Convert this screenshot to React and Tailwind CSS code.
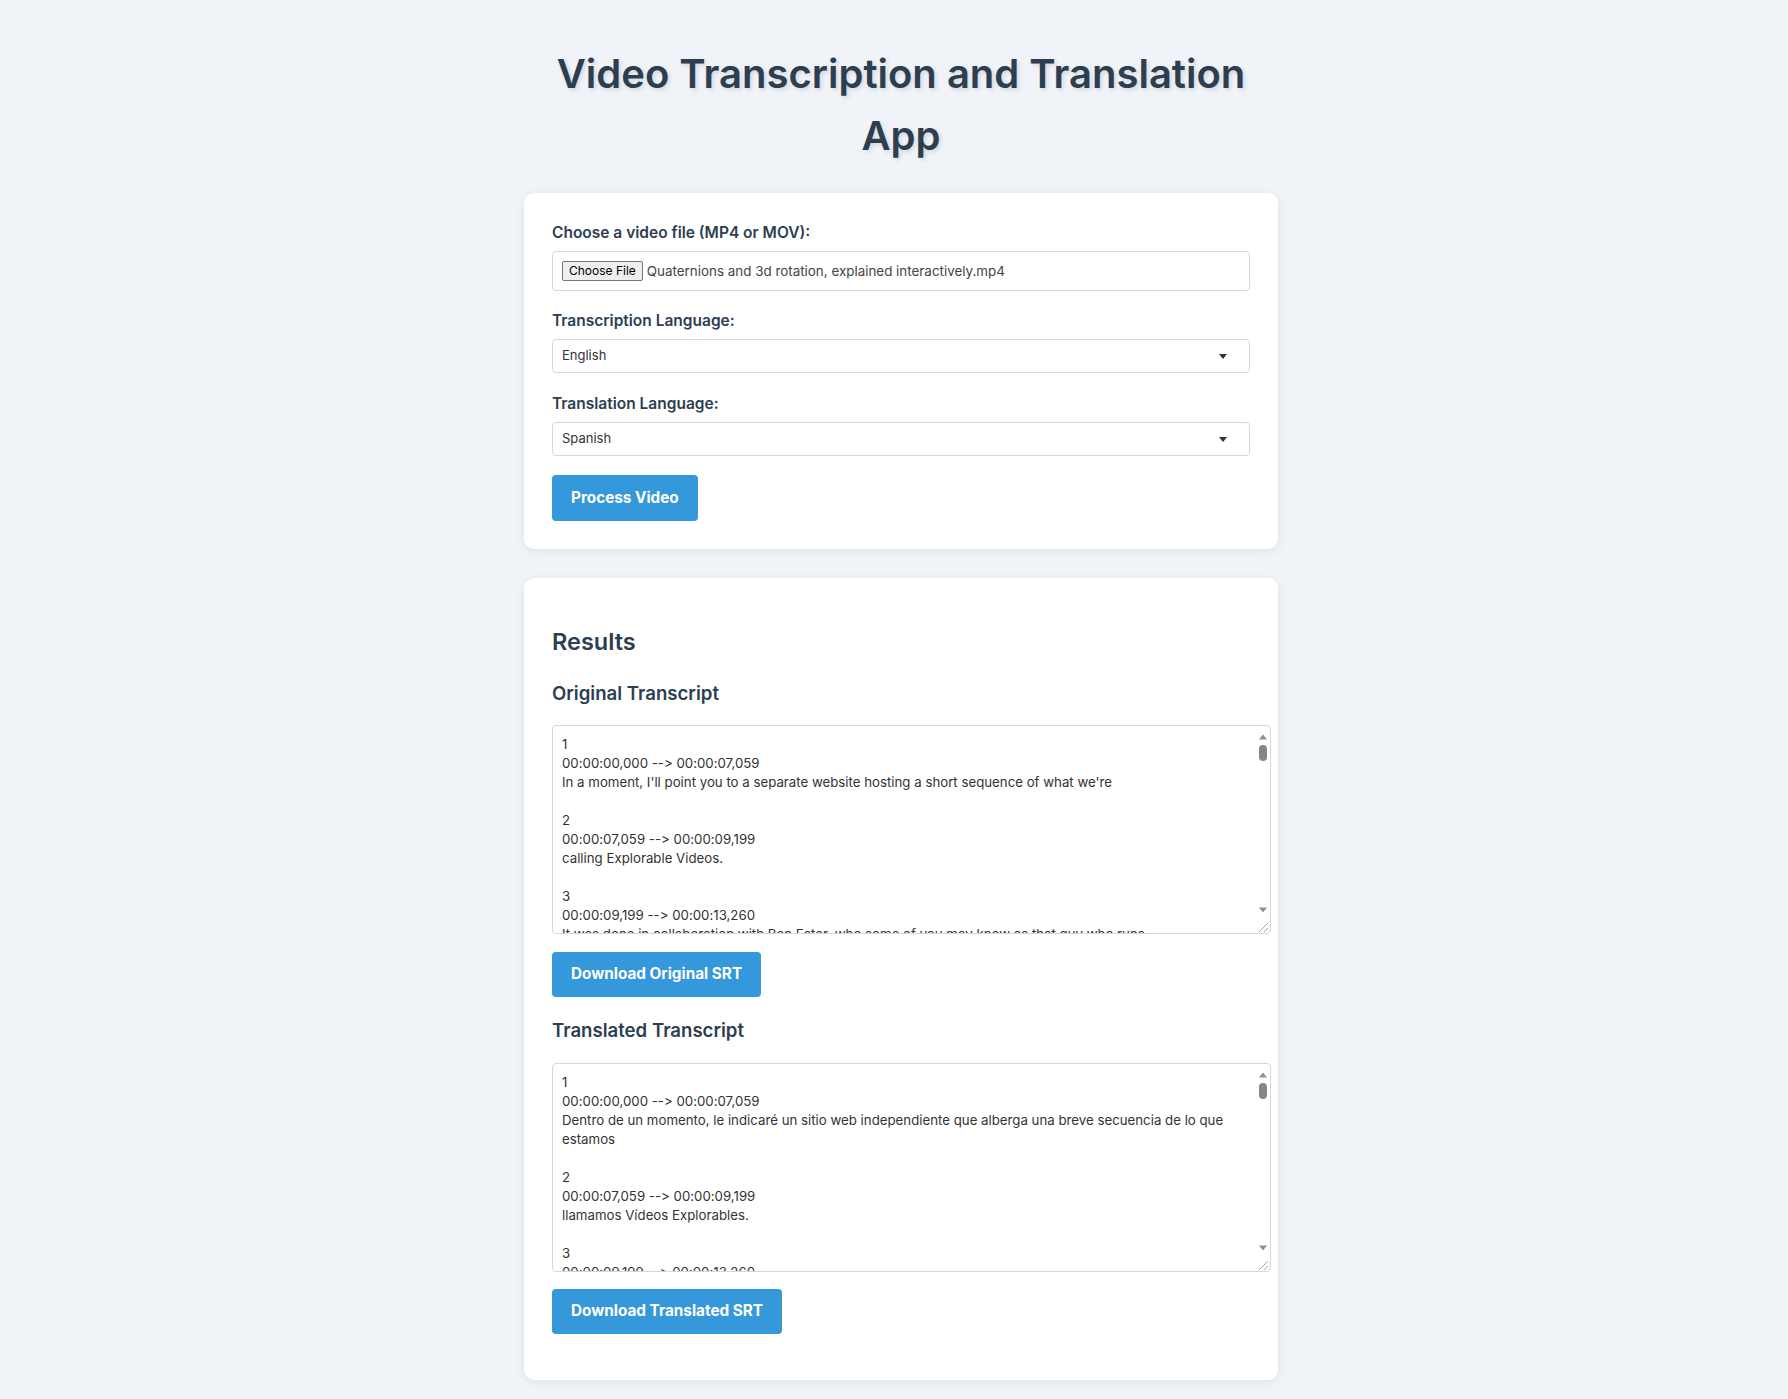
import React from 'react';

const original = [
  ['00:00:00,000 --> 00:00:07,059', "In a moment, I'll point you to a separate website hosting a short sequence of what we're"],
  ['00:00:07,059 --> 00:00:09,199', 'calling Explorable Videos.'],
  ['00:00:09,199 --> 00:00:13,260', 'It was done in collaboration with Ben Eater, who some of you may know as that guy who runs'],
  ['00:00:13,260 --> 00:00:16,879', 'the excellent computer engineering channel.'],
  ['00:00:16,879 --> 00:00:20,940', "And if you don't know who he is, viewers of this channel would very much enjoy"],
  ['00:00:20,940 --> 00:00:24,320', 'the content he makes, like his breadboard computer.'],
  ['00:00:24,320 --> 00:00:28,640', 'What he and I have put together here is something a little bit new.'],
  ['00:00:28,640 --> 00:00:32,159', 'It is a video that you can interact with.'],
];

const translated = [
  ['00:00:00,000 --> 00:00:07,059', 'Dentro de un momento, le indicaré un sitio web independiente que alberga una breve secuencia de lo que estamos'],
  ['00:00:07,059 --> 00:00:09,199', 'llamamos Vídeos Explorables.'],
  ['00:00:09,199 --> 00:00:13,260', 'Se hizo en colaboración con Ben Eater, a quien algunos de ustedes conocerán como el que dirige'],
  ['00:00:13,260 --> 00:00:16,879', 'el excelente canal de ingeniería informática.'],
  ['00:00:16,879 --> 00:00:20,940', 'Y si no sabes quién es, a los espectadores de este canal les encantaría'],
  ['00:00:20,940 --> 00:00:24,320', 'el contenido que hace, como su ordenador en placa de pruebas.'],
  ['00:00:24,320 --> 00:00:28,640', 'Lo que él y yo hemos preparado aquí es algo un poco nuevo.'],
  ['00:00:28,640 --> 00:00:32,159', 'Es un vídeo con el que puedes interactuar.'],
];

const toSrt = (rows) =>
  rows.map(([t, s], i) => `${i + 1}\n${t}\n${s}\n`).join('\n');

const font = { fontFamily: 'Inter, "Noto Sans", sans-serif' };

function Label({ children }) {
  return (
    <label className="mb-[6px] block text-[15.5px] font-semibold leading-[24px] text-[#2c3e50]">
      {children}
    </label>
  );
}

function Select({ value }) {
  return (
    <div className="relative flex h-[34px] items-center rounded-[4px] border border-[#d4d8dd] bg-white pl-[9px] text-[13px] text-[#333]">
      {value}
      <span className="absolute right-[22px] top-[14px] h-0 w-0 border-x-[4px] border-t-[5px] border-x-transparent border-t-[#333]" />
    </div>
  );
}

function Button({ children, h = 'h-[46px]' }) {
  return (
    <button
      type="button"
      className={`${h} rounded-[4px] bg-[#3498db] px-[19px] text-[15.3px] font-bold text-white`}
    >
      {children}
    </button>
  );
}

// headless shot hides native scrollbars, so the classic one is drawn beside the textarea
function Transcript({ value }) {
  return (
    <div className="flex h-[209px] w-[719px] rounded-[4px] border border-[#d4d8dd] bg-white">
      <textarea
        readOnly
        value={value}
        className="min-w-0 flex-1 resize-none overflow-hidden bg-transparent pl-[9px] pr-[6px] pt-[9px] text-[13.25px] leading-[19px] text-[#333] outline-none [font-feature-settings:'calt'_0]"
      />
      <div className="flex w-[15px] flex-col items-center pt-[8px]">
        <svg width="8" height="6" viewBox="0 0 8 6">
          <path d="M0 5.5L4 0.5L8 5.5Z" fill="#8f8f8f" />
        </svg>
        <div className="mt-[5px] h-[16px] w-[8px] rounded-full bg-[#858585]" />
        <div className="flex-1" />
        <svg width="8" height="6" viewBox="0 0 8 6">
          <path d="M0 0.5L8 0.5L4 5.5Z" fill="#8f8f8f" />
        </svg>
        <svg width="15" height="14" viewBox="0 0 15 14" className="mt-[6px]">
          <path d="M13 4L4 13M13 9L9 13" stroke="#a8a8a8" strokeWidth="1" />
        </svg>
      </div>
    </div>
  );
}

export default function App() {
  return (
    <div className="min-h-[1399px] bg-[#f0f4f8] pl-[14px]" style={font}>
      <div className="mx-auto w-[754px] pt-[43px]">
        <h1 className="text-center text-[40px] font-semibold leading-[62px] text-[#2c3e50] [text-shadow:2px_2px_4px_rgba(0,0,0,0.12)]">
          Video Transcription and Translation
          <br />
          App
        </h1>

        <div className="mt-[26px] rounded-[10px] bg-white px-[28px] pb-[28px] pt-[28px] shadow-[0_2px_10px_rgba(0,0,0,0.08)]">
          <Label>Choose a video file (MP4 or MOV):</Label>
          <div className="flex h-[40px] items-center rounded-[4px] border border-[#d4d8dd] bg-white pl-[9px]">
            <span className="flex h-[20px] items-center rounded-[2px] border border-[#767676] bg-[#efefef] px-[6px] text-[12px] text-black">
              Choose File
            </span>
            <span className="ml-[4px] text-[13.4px] text-[#444]">
              Quaternions and 3d rotation, explained interactively.mp4
            </span>
          </div>

          <div className="mt-[18px]">
            <Label>Transcription Language:</Label>
            <Select value="English" />
          </div>

          <div className="mt-[19px]">
            <Label>Translation Language:</Label>
            <Select value="Spanish" />
          </div>

          <div className="mt-[19px]">
            <Button>Process Video</Button>
          </div>
        </div>

        <div className="mt-[29px] rounded-[10px] bg-white px-[28px] pb-[46px] pt-[47px] shadow-[0_2px_10px_rgba(0,0,0,0.08)]">
          <h2 className="text-[23.5px] font-semibold leading-[34px] text-[#2c3e50]">Results</h2>

          <h3 className="mt-[20px] text-[18.6px] font-semibold leading-[28px] text-[#2c3e50]">
            Original Transcript
          </h3>
          <div className="mt-[18px]">
            <Transcript value={toSrt(original)} />
          </div>
          <div className="mt-[18px]">
            <Button h="h-[45px]">Download Original SRT</Button>
          </div>

          <h3 className="mt-[19px] text-[18.6px] font-semibold leading-[28px] text-[#2c3e50]">
            Translated Transcript
          </h3>
          <div className="mt-[19px]">
            <Transcript value={toSrt(translated)} />
          </div>
          <div className="mt-[17px]">
            <Button h="h-[45px]">Download Translated SRT</Button>
          </div>
        </div>
      </div>
    </div>
  );
}
